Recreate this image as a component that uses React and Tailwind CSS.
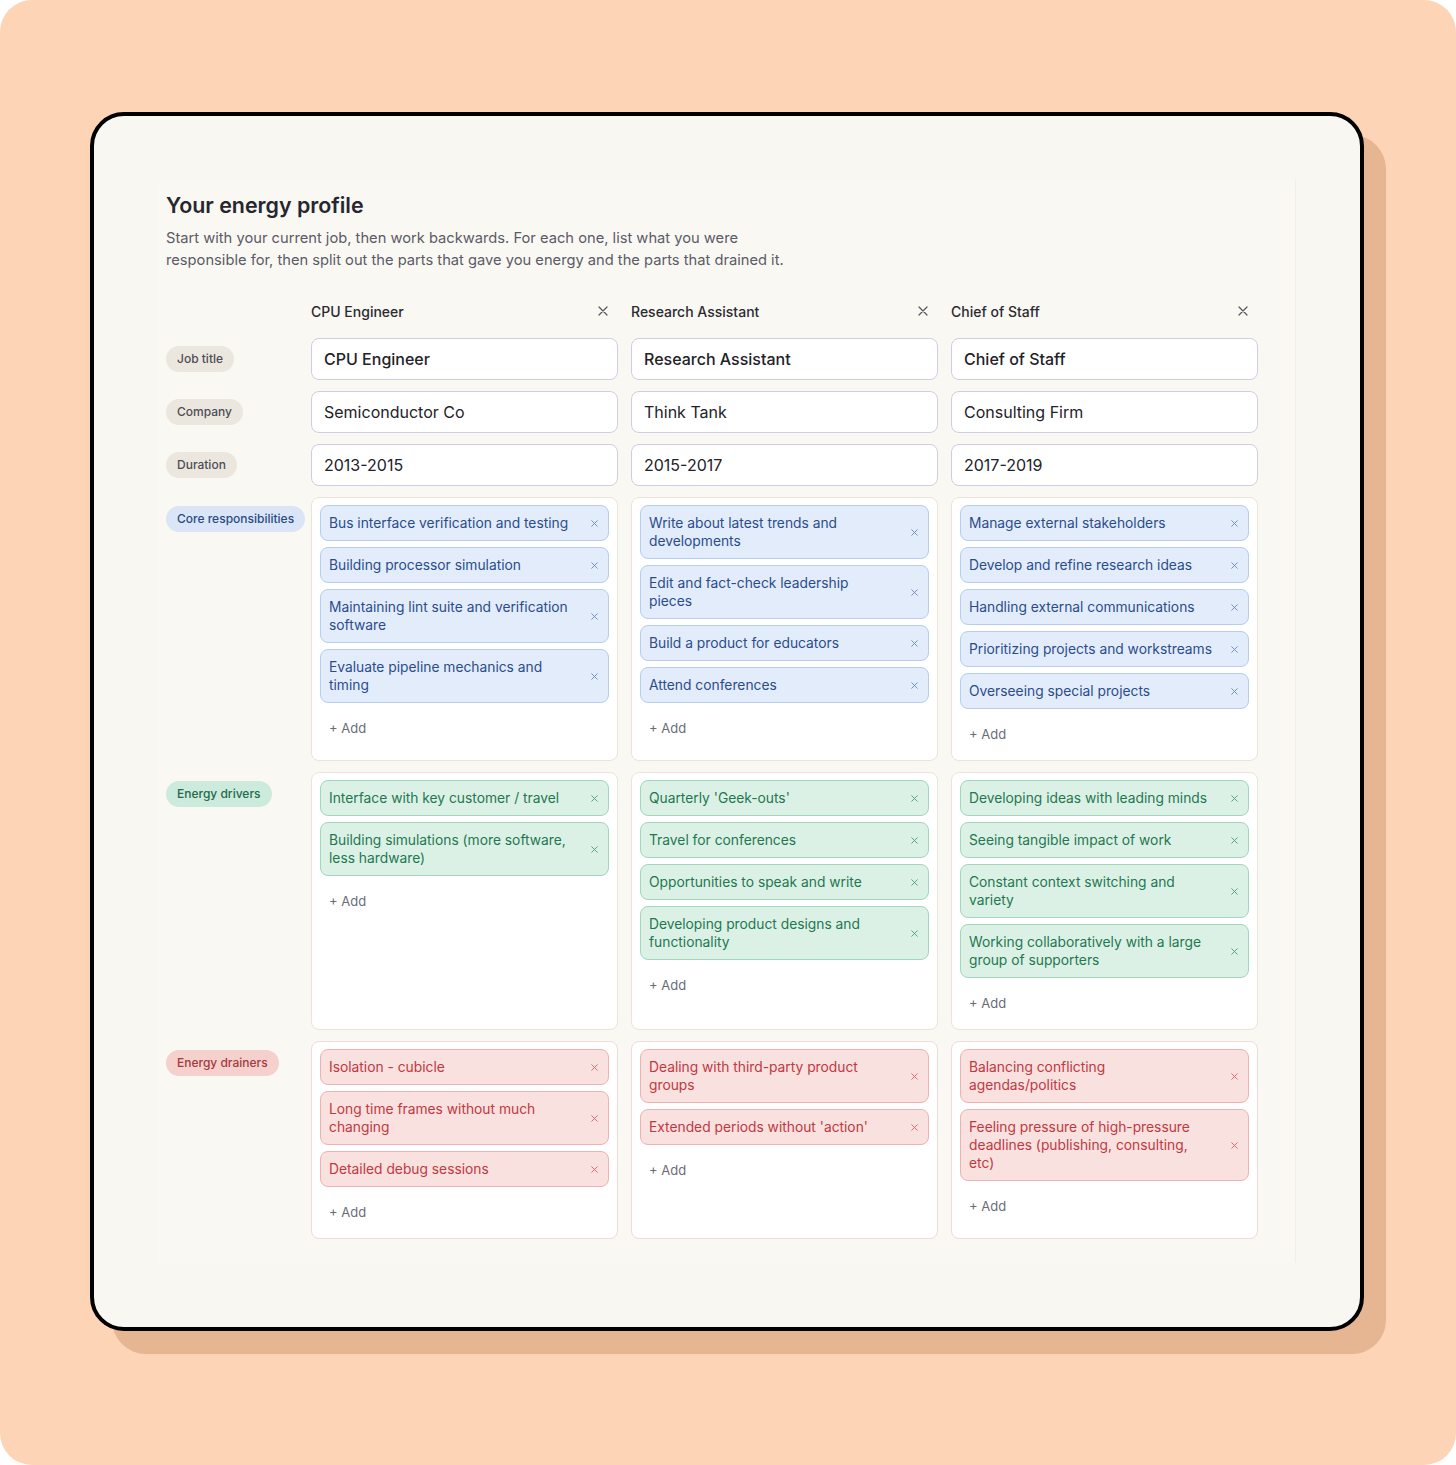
import React from "react";

const jobs = [
  {
    title: "CPU Engineer",
    company: "Semiconductor Co",
    duration: "2013-2015",
    core: [
      "Bus interface verification and testing",
      "Building processor simulation",
      "Maintaining lint suite and verification\nsoftware",
      "Evaluate pipeline mechanics and\ntiming",
    ],
    drivers: [
      "Interface with key customer / travel",
      "Building simulations (more software,\nless hardware)",
    ],
    drainers: [
      "Isolation - cubicle",
      "Long time frames without much\nchanging",
      "Detailed debug sessions",
    ],
  },
  {
    title: "Research Assistant",
    company: "Think Tank",
    duration: "2015-2017",
    core: [
      "Write about latest trends and\ndevelopments",
      "Edit and fact-check leadership\npieces",
      "Build a product for educators",
      "Attend conferences",
    ],
    drivers: [
      "Quarterly 'Geek-outs'",
      "Travel for conferences",
      "Opportunities to speak and write",
      "Developing product designs and\nfunctionality",
    ],
    drainers: [
      "Dealing with third-party product\ngroups",
      "Extended periods without 'action'",
    ],
  },
  {
    title: "Chief of Staff",
    company: "Consulting Firm",
    duration: "2017-2019",
    core: [
      "Manage external stakeholders",
      "Develop and refine research ideas",
      "Handling external communications",
      "Prioritizing projects and workstreams",
      "Overseeing special projects",
    ],
    drivers: [
      "Developing ideas with leading minds",
      "Seeing tangible impact of work",
      "Constant context switching and\nvariety",
      "Working collaboratively with a large\ngroup of supporters",
    ],
    drainers: [
      "Balancing conflicting\nagendas/politics",
      "Feeling pressure of high-pressure\ndeadlines (publishing, consulting,\netc)",
    ],
  },
];

const tones = {
  blue: {
    tag: "bg-[#e3ecfa] border-[#b6cdef] text-[#2a4c8c]",
    x: "text-[#6d88b8]",
    pill: "bg-[#dae6f7] text-[#2a4a84]",
    box: "border-[#efe2d8]",
  },
  green: {
    tag: "bg-[#dcf1e6] border-[#a3d7bc] text-[#1e7850]",
    x: "text-[#4f9c77]",
    pill: "bg-[#cdebdc] text-[#226a4b]",
    box: "border-[#efe2da]",
  },
  red: {
    tag: "bg-[#f9e1df] border-[#f0b1b1] text-[#c1383f]",
    x: "text-[#d4646b]",
    pill: "bg-[#f5d0cd] text-[#a63a3d]",
    box: "border-[#f2d9db]",
  },
};

function Cross({ size = 8, className = "", stroke = 1.4 }) {
  return (
    <svg
      width={size}
      height={size}
      viewBox="0 0 10 10"
      className={className}
      fill="none"
      stroke="currentColor"
      strokeWidth={stroke}
      strokeLinecap="round"
    >
      <path d="M1 1L9 9M9 1L1 9" />
    </svg>
  );
}

function Pill({ children, className }) {
  return (
    <span
      className={`inline-flex h-[26px] items-center whitespace-nowrap rounded-full px-[11px] text-[12px] font-medium ${className}`}
    >
      {children}
    </span>
  );
}

function Tag({ text, tone }) {
  const t = tones[tone];
  return (
    <div
      className={`flex items-center rounded-lg border py-2 pl-2 pr-[7px] ${t.tag}`}
    >
      <span className="flex-1 whitespace-pre-line text-[13.8px] leading-[18px]">
        {text}
      </span>
      <span className={`ml-[10px] flex w-[14px] justify-center ${t.x}`}>
        <Cross size={7} stroke={1.3} />
      </span>
    </div>
  );
}

function TagBox({ items, tone }) {
  return (
    <div
      className={`flex flex-col rounded-lg border bg-white px-2 pb-[7px] pt-[7px] ${tones[tone].box}`}
    >
      <div className="flex flex-col gap-[6px]">
        {items.map((it) => (
          <Tag key={it} text={it} tone={tone} />
        ))}
      </div>
      <div className="mt-2 flex h-[36px] items-center pl-[9px] text-[13px] text-[#6b6b78]">
        + Add
      </div>
    </div>
  );
}

function Field({ value, strong }) {
  return (
    <div
      className={`flex h-[42px] items-center rounded-lg border border-[#cfcde6] bg-white px-3 text-[16px] text-[#222228] ${
        strong ? "font-medium" : ""
      }`}
    >
      {value}
    </div>
  );
}

export default function App() {
  const fieldRows = [
    { label: "Job title", key: "title", strong: true },
    { label: "Company", key: "company" },
    { label: "Duration", key: "duration" },
  ];
  const tagRows = [
    { label: "Core responsibilities", key: "core", tone: "blue" },
    { label: "Energy drivers", key: "drivers", tone: "green" },
    { label: "Energy drainers", key: "drainers", tone: "red" },
  ];

  return (
    <div
      className="min-h-[1465px] w-[1456px] bg-white"
      style={{ fontFamily: "Inter, 'Noto Sans', 'Liberation Sans', sans-serif" }}
    >
      <div className="h-[1465px] w-[1456px] rounded-[32px] bg-[#fdd5b6] pl-[90px] pt-[112px]">
        <div className="w-[1274px] rounded-[34px] border-4 border-black bg-[#f9f7f1] p-16 shadow-[22px_23px_0_0_#e6b591]">
          <div className="border-r border-[#f1efe8] bg-[#faf8f3] pb-[24px] pl-2 pr-[36px] pt-[11px]">
            <h1 className="text-[21.4px] font-semibold leading-[28px] text-[#26262e]">
              Your energy profile
            </h1>
            <p className="mt-2 text-[14.7px] leading-[22px] text-[#5b5b67]">
              Start with your current job, then work backwards. For each one, list what you were
              <br />
              responsible for, then split out the parts that gave you energy and the parts that
              drained it.
            </p>

            <div className="mt-[30px] grid grid-cols-[132px_repeat(3,307px)] gap-x-[13px] gap-y-[11px]">
              <div />
              {jobs.map((j) => (
                <div
                  key={j.title}
                  className="mb-[6px] flex h-[20px] items-center justify-between pr-[10px]"
                >
                  <span className="text-[14px] font-medium text-[#2a2a31]">{j.title}</span>
                  <Cross size={10} className="text-[#55555e]" stroke={1.2} />
                </div>
              ))}

              {fieldRows.map((r) => (
                <React.Fragment key={r.key}>
                  <div className="flex items-center">
                    <Pill className="bg-[#ebe7de] text-[#4d4d57]">{r.label}</Pill>
                  </div>
                  {jobs.map((j) => (
                    <Field key={j.title} value={j[r.key]} strong={r.strong} />
                  ))}
                </React.Fragment>
              ))}

              {tagRows.map((r) => (
                <React.Fragment key={r.key}>
                  <div className="pt-[8px]">
                    <Pill className={tones[r.tone].pill}>{r.label}</Pill>
                  </div>
                  {jobs.map((j) => (
                    <TagBox key={j.title} items={j[r.key]} tone={r.tone} />
                  ))}
                </React.Fragment>
              ))}
            </div>
          </div>
        </div>
      </div>
    </div>
  );
}
